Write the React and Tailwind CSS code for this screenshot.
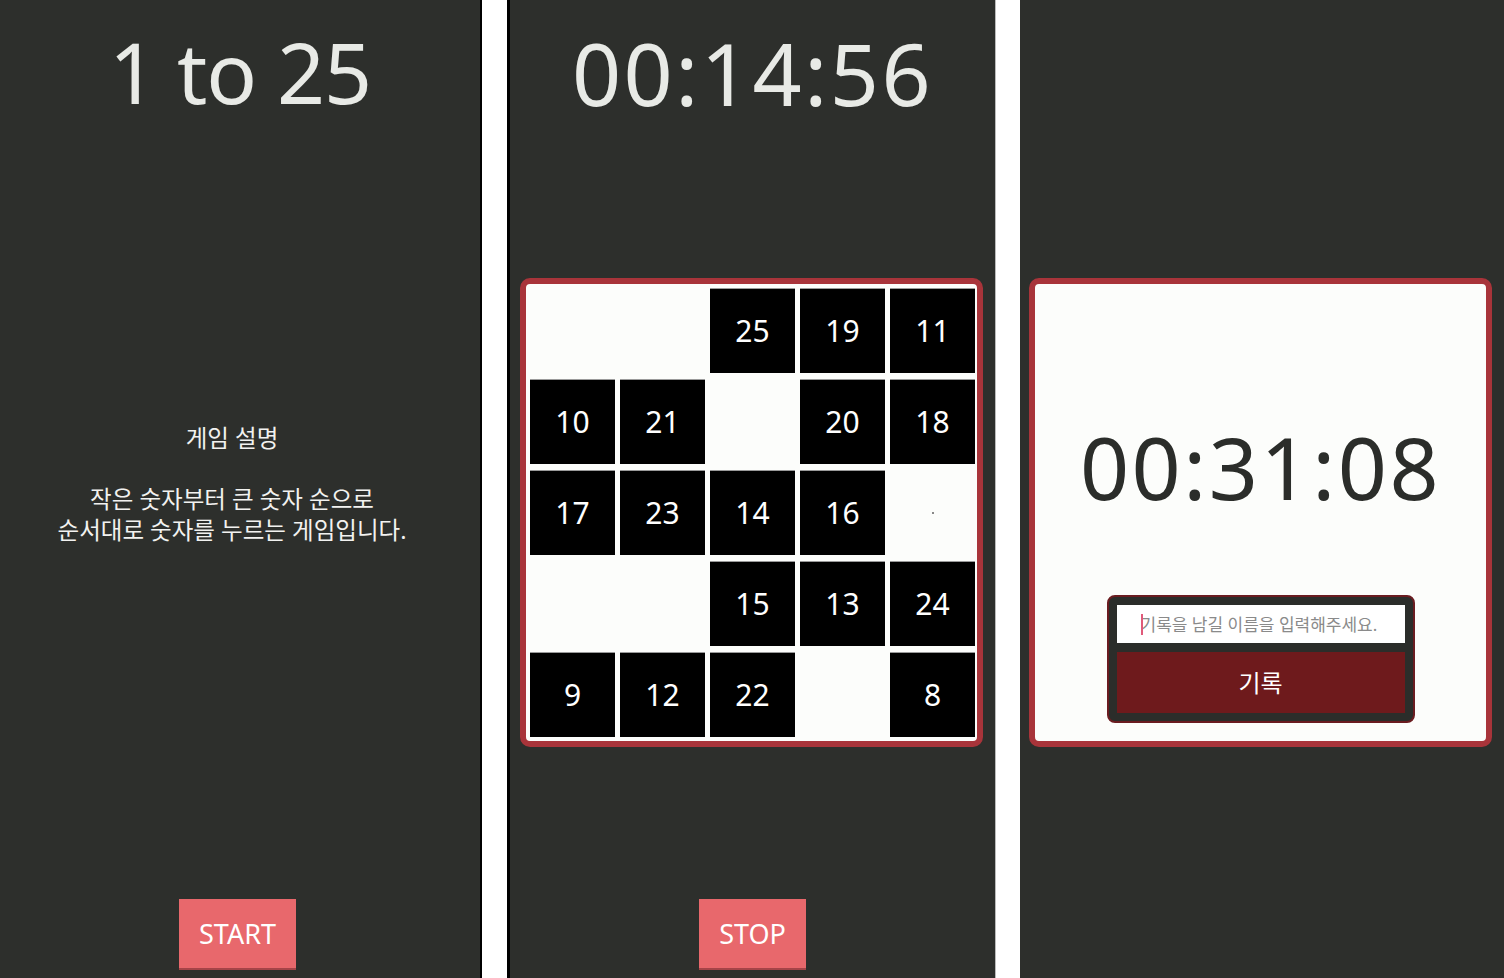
import React from 'react';

const font = "font-['Noto_Sans','Noto_Sans_CJK_KR',sans-serif]";

const board = [
  [null, null, 25, 19, 11],
  [10, 21, null, 20, 18],
  [17, 23, 14, 16, '.'],
  [null, null, 15, 13, 24],
  [9, 12, 22, null, 8],
];

const Cell = ({ value }) => {
  if (value === null) return <div className="w-[85px] h-[85px] bg-[#fcfdfb]" />;
  if (value === '.') {
    return (
      <div className="w-[85px] h-[85px] bg-[#fcfdfb] flex items-center justify-center">
        <span className="w-[2px] h-[2px] bg-[#888]" />
      </div>
    );
  }
  return (
    <div className="w-[85px] h-[85px] bg-black border-t border-[#9a9a9a] flex items-center justify-center text-white text-[30px] leading-none">
      {value}
    </div>
  );
};

const PinkButton = ({ children }) => (
  <button className="h-[71px] px-[20px] bg-[#e8686c] border-b-2 border-[#a54448] text-white text-[27px] leading-none">
    {children}
  </button>
);

const App = () => {
  return (
    <div className={`${font} flex w-[1504px] h-[978px] bg-white overflow-hidden`}>
      {/* intro */}
      <div className="w-[482px] h-full bg-[#2d2f2c] border-r-2 border-black flex flex-col">
        <h1 className="pt-[30px] text-center text-[84px] leading-none tracking-[-1px] text-[#e8eae6] font-normal">1 to 25</h1>
        <div className="mt-[309px] pr-[16px] text-center text-[23.5px] leading-[30.5px] text-[#f2f2f0]">
          <p>게임 설명</p>
          <p>&nbsp;</p>
          <p>작은 숫자부터 큰 숫자 순으로</p>
          <p>순서대로 숫자를 누르는 게임입니다.</p>
        </div>
        <div className="flex-1 flex items-end justify-center pr-[5px] pb-[8px]">
          <PinkButton>START</PinkButton>
        </div>
      </div>

      <div className="w-[25px] h-full bg-white" />

      {/* game */}
      <div className="w-[488px] h-full bg-[#2d2f2c] border-l-[3px] border-black flex flex-col">
        <h1 className="pt-[30px] text-center text-[86px] leading-none tracking-[2.5px] text-[#e8eae6] font-normal">00:14:56</h1>
        <div className="mt-[162px] ml-[10px] w-[463px] h-[469px] border-[6px] border-[#a8343a] rounded-[10px] bg-[#fcfdfb] pt-[4px] pl-[4px]">
          <div className="grid grid-cols-[repeat(5,85px)] gap-x-[5px] gap-y-[6px]">
            {board.flat().map((v, i) => (
              <Cell key={i} value={v} />
            ))}
          </div>
        </div>
        <div className="flex-1 flex items-end justify-center pb-[8px]">
          <PinkButton>STOP</PinkButton>
        </div>
      </div>

      <div className="w-[25px] h-full bg-white border-l border-[#bbb]" />

      {/* result */}
      <div className="flex-1 h-full bg-[#2d2f2c] pt-[278px] pl-[9px]">
        <div className="w-[463px] h-[469px] border-[6px] border-[#a8343a] rounded-[10px] bg-[#fcfdfb] flex flex-col items-center">
          <div className="mt-[140px] text-[86px] leading-none tracking-[2.5px] text-[#2b2d2a]">00:31:08</div>
          <div className="mt-[85px] w-[308px] bg-[#2b2d2a] border-2 border-[#6a1c20] rounded-[8px] p-[8px] flex flex-col gap-[9px]">
            <div className="h-[38px] bg-white flex items-center pl-[24px] relative">
              <span className="absolute left-[24px] top-[9px] w-[2px] h-[21px] bg-[#e05a7a]" />
              <span className="text-[17px] text-[#8a8a8a] leading-none">기록을 남길 이름을 입력해주세요.</span>
            </div>
            <button className="h-[61px] bg-[#6e1a1c] text-white text-[24px] leading-none">기록</button>
          </div>
        </div>
      </div>
    </div>
  );
};

export default App;
